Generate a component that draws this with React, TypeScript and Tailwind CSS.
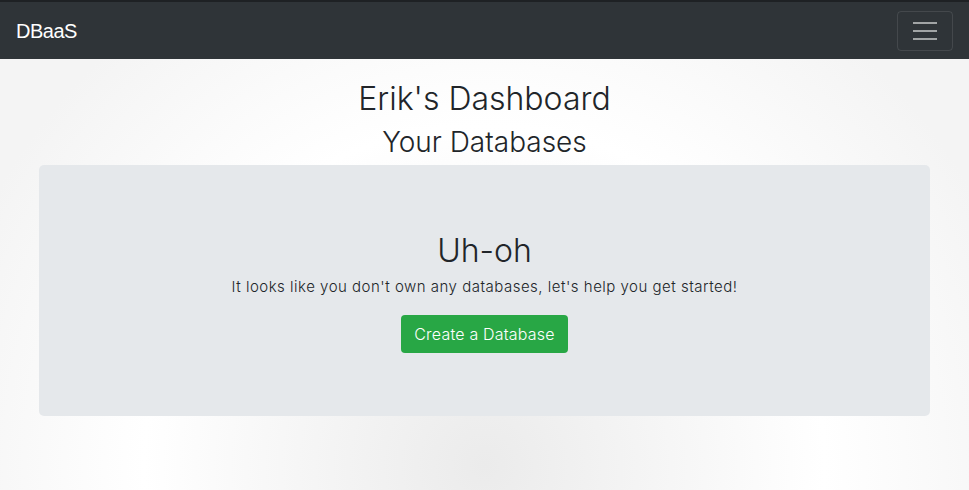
const jura = { fontFamily: "Inter, 'Noto Sans', sans-serif" };

export default function App() {
  return (
    <div
      className="min-h-screen w-full"
      style={{
        background:
          "radial-gradient(circle at 50% 95%, #ebebeb 0px, #ffffff 340px, #f4f4f4 560px)",
      }}
    >
      <nav className="h-[59px] border-t-2 border-[#1e2124] bg-[#2f3438] flex items-center justify-between pl-4 pr-4">
        <span className="text-white text-[20px] font-['Liberation_Sans',Arial,sans-serif] tracking-tight">DBaaS</span>
        <button className="w-[56px] h-[40px] rounded-[4px] border border-white/10 flex items-center justify-center">
          <span className="flex flex-col gap-[6px]">
            <span className="block w-[24px] h-[2px] bg-white/55" />
            <span className="block w-[24px] h-[2px] bg-white/55" />
            <span className="block w-[24px] h-[2px] bg-white/55" />
          </span>
        </button>
      </nav>

      <main className="text-center text-[#212529]" style={jura}>
        <h1 className="pt-[20px] text-[32px] font-light leading-[40px]">Erik's Dashboard</h1>
        <h2 className="mt-[3px] text-[28px] font-light leading-[40px]">Your Databases</h2>
        <section className="mx-[39px] mt-[3px] h-[251px] rounded-[5px] bg-[#e5e8eb] flex flex-col items-center pt-[67px]">
          <h3 className="text-[32px] font-light leading-[38px]">Uh-oh</h3>
          <p className="mt-[7px] text-[15px] font-light leading-[20px] tracking-[0.5px]">
            It looks like you don't own any databases, let's help you get started!
          </p>
          <button className="mt-[18px] h-[38px] px-[13px] rounded-[4px] bg-[#28a745] text-white text-[16px] font-light tracking-[0.2px]">
            Create a Database
          </button>
        </section>
      </main>
    </div>
  );
}
